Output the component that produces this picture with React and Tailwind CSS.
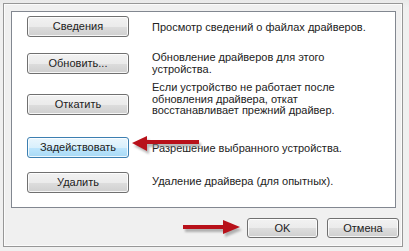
import React from "react";

const rows = [
  { label: "Сведения", text: ["Просмотр сведений о файлах драйверов."], h: "h-[36px]", btnTop: "mt-0", textTop: "mt-[6px]" },
  { label: "Обновить...", text: ["Обновление драйверов для этого", "устройства."], h: "h-[30px]", btnTop: "mt-[1px]", textTop: "mt-0" },
  { label: "Откатить", text: ["Если устройство не работает после", "обновления драйвера, откат", "восстанавливает прежний драйвер."], h: "h-[55px]", btnTop: "mt-[12px]", textTop: "mt-0" },
  { label: "Задействовать", text: ["Разрешение выбранного устройства."], h: "h-[35px]", btnTop: "mt-0", textTop: "mt-[6px]", active: true },
  { label: "Удалить", text: ["Удаление драйвера (для опытных)."], h: "h-[21px]", btnTop: "mt-0", textTop: "mt-[4px]" },
];

const WinButton = ({ children, active, className }) => (
  <div
    className={
      "flex items-center justify-center rounded-[3px] border text-[11px] leading-none text-[#222] shadow-[inset_0_0_0_1px_rgba(255,255,255,0.8)] " +
      (active
        ? "border-[#3c7fb1] bg-[linear-gradient(#eaf6fd_0%,#d9f0fc_50%,#bee6fd_51%,#a7d9f5_100%)] "
        : "border-[#707070] bg-[linear-gradient(#f2f2f2_0%,#ebebeb_50%,#dddddd_51%,#cfcfcf_100%)] ") +
      className
    }
  >
    {children}
  </div>
);

const Arrow = ({ className, width, height, shaft, head }) => (
  <svg className={"absolute " + className} width={width} height={height}>
    <defs>
      <filter id="blur" x="-20%" y="-50%" width="140%" height="200%">
        <feGaussianBlur stdDeviation="1.2" />
      </filter>
    </defs>
    <g transform="translate(2,3)" fill="#7a7a7a" opacity="0.55" filter="url(#blur)">
      <rect {...shaft} />
      <polygon points={head} />
    </g>
    <g fill="#b8111a">
      <rect {...shaft} />
      <polygon points={head} />
    </g>
  </svg>
);

export default function App() {
  return (
    <div className="relative h-[251px] w-[409px] overflow-hidden bg-[linear-gradient(#e9e9e9,#f0f0f0_8px)] pl-[3px] pt-[3px] font-['Liberation_Sans',Arial,sans-serif]">
      <div className="h-[244px] w-[400px] border border-[#979797] bg-[#f0f0f0] shadow-[inset_0_0_0_1px_#fbfbfb] pl-[7px] pt-[7px]">
        <div className="h-[197px] w-[385px] border border-[#828790] bg-white pl-[15px] pt-[4px]">
          {rows.map((r) => (
            <div key={r.label} className={"flex items-start " + r.h}>
              <WinButton active={r.active} className={"h-[21px] w-[102px] shrink-0 " + r.btnTop}>
                {r.label}
              </WinButton>
              <div className={"ml-[23px] text-[11px] leading-[11.5px] text-[#222] " + r.textTop}>
                {r.text.map((t) => (
                  <div key={t} className="whitespace-nowrap">{t}</div>
                ))}
              </div>
            </div>
          ))}
        </div>
        <div className="mt-[10px] flex justify-end gap-[9px] pr-[3px]">
          <WinButton className="h-[20px] w-[71px]">OK</WinButton>
          <WinButton className="h-[20px] w-[72px]">Отмена</WinButton>
        </div>
      </div>

      <Arrow
        className="left-[130px] top-[134px]"
        width={74}
        height={22}
        shaft={{ x: 16, y: 6, width: 53, height: 4 }}
        head="2,9 17,2 17,17"
      />
      <Arrow
        className="left-[181px] top-[217px]"
        width={65}
        height={22}
        shaft={{ x: 2, y: 8, width: 42, height: 4 }}
        head="59,10 42,3 42,17"
      />
    </div>
  );
}
